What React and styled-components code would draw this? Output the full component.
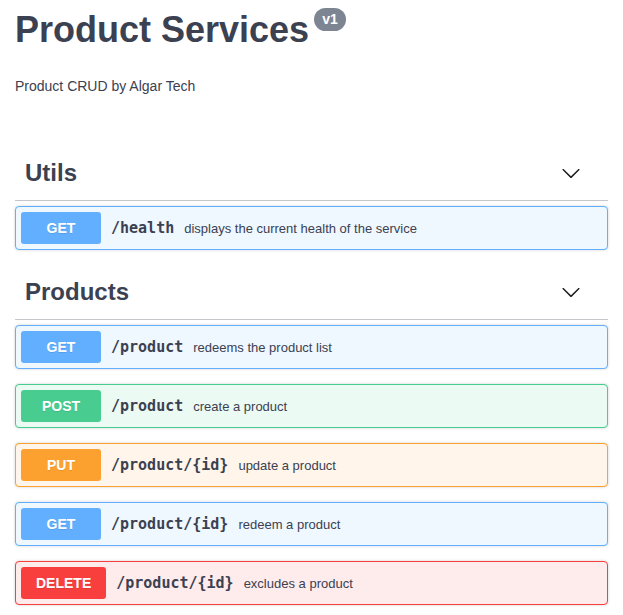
import React from "react";
import styled, { createGlobalStyle } from "styled-components";

const GlobalStyle = createGlobalStyle`
body{
  margin:0;
  background:#fff;
  font-family:"Liberation Sans", Arial, sans-serif;
  color:#3b4151;
}
`

const methods = {
  GET: { main: "#61affe", tint: "#eff7ff" },
  POST: { main: "#49cc90", tint: "#ecfaf4" },
  PUT: { main: "#fca130", tint: "#fff5ea" },
  DELETE: { main: "#f93e3e", tint: "#feebeb" },
};

const Page = styled.div`
padding: 10px 15px 0;
`
const Info = styled.div`
margin-bottom: 52px;
`
const Title = styled.h2`
display:flex;
align-items:flex-start;
margin:0;
font-size:36px;
line-height:40px;
font-weight:700;
color:#3b4151;
`
const Version = styled.small`
margin:-2px 0 0 5px;
height:23px;
padding:0 8px;
border-radius:57px;
background:#7d8492;
color:#fff;
font-size:14px;
line-height:23px;
font-weight:700;
`
const Description = styled.p`
margin:28px 0 0;
font-size:14px;
line-height:16px;
`
const TagSection = styled.section`
display:flex;
flex-direction:column;
`
const TagHeading = styled.h3`
display:flex;
align-items:center;
justify-content:space-between;
min-height:34px;
margin:0 0 5px;
padding:10px 27px 10px 10px;
border-bottom:1px solid rgba(59,65,81,.3);
font-size:24px;
font-weight:700;
color:#3b4151;
`
const Arrow = styled.svg`
width:20px;
height:20px;
fill:#1b1b1b;
`
const Opblock = styled.div`
margin:0 0 15px;
border:1px solid ${({ method }) => methods[method].main};
border-radius:4px;
background:${({ method }) => methods[method].tint};
box-shadow:0 0 3px rgba(0,0,0,.19);
`
const Summary = styled.div`
display:flex;
align-items:center;
padding:5px;
`
const Method = styled.span`
min-width:80px;
box-sizing:border-box;
padding:6px 15px;
border-radius:3px;
background:${({ method }) => methods[method].main};
color:#fff;
font-size:14px;
line-height:20px;
font-weight:700;
text-align:center;
text-shadow:0 1px 0 rgba(0,0,0,.1);
`
const Path = styled.span`
padding:0 10px;
font-family:"DejaVu Sans Mono", "Liberation Mono", monospace;
font-size:15px;
font-weight:700;
color:#3b4151;
`
const Desc = styled.span`
font-size:13px;
color:#3b4151;
`

const tags = [
  {
    name: "Utils",
    ops: [{ method: "GET", path: "/health", text: "displays the current health of the service" }],
  },
  {
    name: "Products",
    ops: [
      { method: "GET", path: "/product", text: "redeems the product list" },
      { method: "POST", path: "/product", text: "create a product" },
      { method: "PUT", path: "/product/{id}", text: "update a product" },
      { method: "GET", path: "/product/{id}", text: "redeem a product" },
      { method: "DELETE", path: "/product/{id}", text: "excludes a product" },
    ],
  },
];

function Chevron() {
  return (
    <Arrow viewBox="0 0 20 20">
      <path d="M17.418 6.109c.272-.268.709-.268.979 0s.271.701 0 .969l-7.908 7.83c-.27.268-.707.268-.979 0l-7.908-7.83c-.27-.268-.27-.701 0-.969.271-.268.709-.268.979 0L10 13.25l7.418-7.141z" />
    </Arrow>
  );
}

export default function App() {
  return (
    <Page>
      <GlobalStyle />
      <Info>
        <Title>
          Product Services
          <Version>v1</Version>
        </Title>
        <Description>Product CRUD by Algar Tech</Description>
      </Info>
      {tags.map((tag) => (
        <TagSection key={tag.name}>
          <TagHeading>
            <span>{tag.name}</span>
            <Chevron />
          </TagHeading>
          {tag.ops.map((op, i) => (
            <Opblock key={i} method={op.method}>
              <Summary>
                <Method method={op.method}>{op.method}</Method>
                <Path>{op.path}</Path>
                <Desc>{op.text}</Desc>
              </Summary>
            </Opblock>
          ))}
        </TagSection>
      ))}
    </Page>
  );
}
